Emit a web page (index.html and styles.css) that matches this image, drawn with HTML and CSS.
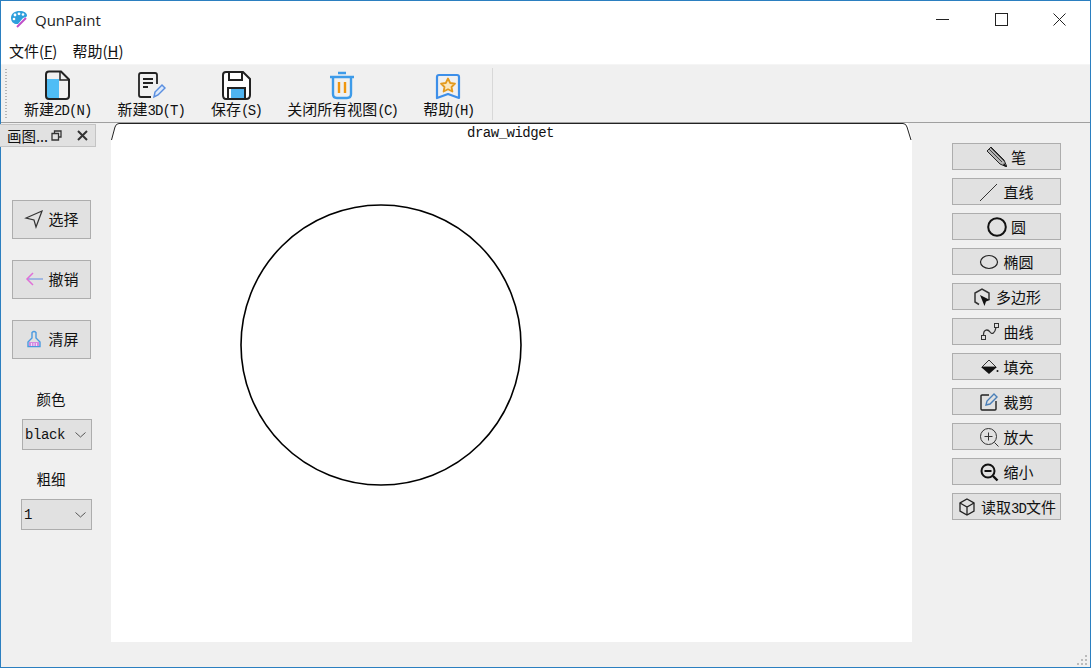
FILE: index.html
```html
<!DOCTYPE html>
<html lang="zh-CN">
<head>
    <meta charset="UTF-8">
    <title>QunPaint</title>
    <link rel="stylesheet" href="styles.css">
</head>
<body>
<div class="window">

    <!-- barre de titre -->
    <div class="titlebar">
        <svg class="app-icon" width="18" height="18" viewBox="0 0 18 18">
            <path d="M1 8C1 3.500 5 1 9.500 1S17 3 17 5.500C17 7 15 7.500 13 8L8 14C4 14.500 1 12 1 8Z" fill="#2f9fdc"/>
            <circle cx="5" cy="5" r="1.400" fill="#fff"/>
            <circle cx="9" cy="3.800" r="1.400" fill="#fff"/>
            <circle cx="13" cy="4.500" r="1.300" fill="#fff"/>
            <circle cx="4" cy="9" r="1.300" fill="#fff"/>
            <path d="M7 17L16 8" stroke="#c04fc8" stroke-width="2"/>
        </svg>
        <span class="app-title">QunPaint</span>
        <div class="win-controls">
            <div class="win-btn"><svg width="13" height="13" viewBox="0 0 13 13"><path d="M0 6.500H13" stroke="#222"/></svg></div>
            <div class="win-btn"><svg width="13" height="13" viewBox="0 0 13 13"><rect x=".5" y=".5" width="12" height="12" fill="none" stroke="#222"/></svg></div>
            <div class="win-btn"><svg width="13" height="13" viewBox="0 0 13 13"><path d="M.5 .5L12.500 12.500M12.500 .5L.5 12.500" stroke="#222"/></svg></div>
        </div>
    </div>

    <!-- menu -->
    <div class="menubar">
        <span class="menu-item">文件(<u>F</u>)</span>
        <span class="menu-item">帮助(<u>H</u>)</span>
    </div>

    <!-- barre d'outils -->
    <div class="toolbar">
        <div class="tool-handle"></div>
        <div class="tool-item">
            <svg width="30" height="30" viewBox="0 0 30 30">
                <path d="M4 9H16V28H4Z" fill="#4fbdf5"/>
                <path d="M6 1.500H18L26 9.500V26Q26 29 23 29H6Q3 29 3 26V4.500Q3 1.500 6 1.500Z" fill="none" stroke="#222" stroke-width="2"/>
                <path d="M17 2V10H26" fill="none" stroke="#222" stroke-width="1.500"/>
            </svg>
            <span class="tool-text">新建<span class="en">2D(N)</span></span>
        </div>
        <div class="tool-item">
            <svg width="30" height="30" viewBox="0 0 30 30">
                <path d="M21 14V5Q21 3 19 3H5Q3 3 3 5V25Q3 27 5 27H15" fill="none" stroke="#222" stroke-width="1.800"/>
                <path d="M7 9H17M7 13H17M7 17H12" stroke="#222" stroke-width="1.800"/>
                <path d="M18 27L19 22L26 15L29 18L22 25Z" fill="#dce9fb" stroke="#5b8fe0" stroke-width="1.500"/>
            </svg>
            <span class="tool-text">新建<span class="en">3D(T)</span></span>
        </div>
        <div class="tool-item">
            <svg width="30" height="30" viewBox="0 0 30 30">
                <path d="M5 2H22L29 9V25Q29 29 25 29H5Q2 29 2 25V5Q2 2 5 2Z" fill="#fff" stroke="#222" stroke-width="2"/>
                <path d="M8 3V10H21V3" fill="none" stroke="#222" stroke-width="2"/>
                <path d="M7 28V18H24V28" fill="#fff" stroke="#222" stroke-width="2"/>
                <rect x="10" y="19" width="13" height="9" fill="#4fb4f0"/>
            </svg>
            <span class="tool-text">保存<span class="en en-short">(S)</span></span>
        </div>
        <div class="tool-item">
            <svg width="30" height="30" viewBox="0 0 30 30">
                <path d="M3 7H27M11 3H19" stroke="#3d9be9" stroke-width="2.400" fill="none"/>
                <path d="M6 7V24Q6 28 10 28H20Q24 28 24 24V7" fill="none" stroke="#3d9be9" stroke-width="2.400"/>
                <path d="M12 12V23M18 12V23" stroke="#f0960e" stroke-width="2.400"/>
            </svg>
            <span class="tool-text tool-wide">关闭所有视图<span class="en en-short">(C)</span></span>
        </div>
        <div class="tool-item">
            <svg width="30" height="30" viewBox="0 0 30 30">
                <path d="M6 5H24Q26 5 26 7V28L15 24L4 28V7Q4 5 6 5Z" fill="none" stroke="#3d8fe9" stroke-width="2.200" stroke-linejoin="round"/>
                <path d="M15 8.500L17.200 13L22 13.600L18.500 17L19.400 21.500L15 19.300L10.600 21.500L11.500 17L8 13.600L12.800 13Z" fill="#fbe7bd" stroke="#e39a1e" stroke-width="1.800" stroke-linejoin="round"/>
            </svg>
            <span class="tool-text">帮助<span class="en en-short">(H)</span></span>
        </div>
        <div class="tool-sep"></div>
    </div>

    <div class="main">

        <!-- panneau gauche -->
        <div class="left-panel">
            <div class="dock-title">
                <span class="dock-name">画图...</span>
                <svg width="11" height="11" viewBox="0 0 11 11"><path d="M3.500 3V1H10V7H7.500M1 3.500H7.500V10H1Z" fill="none" stroke="#333" stroke-width="1.300"/></svg>
                <svg class="dock-close" width="11" height="11" viewBox="0 0 11 11"><path d="M1 1L10 10M10 1L1 10" stroke="#333" stroke-width="2"/></svg>
            </div>
            <div class="left-tools">
                <div class="btn btn-left">
                    <svg width="20" height="20" viewBox="0 0 20 20"><path d="M18 2L2 9L10 11L12 18Z" fill="none" stroke="#333" stroke-width="1.200"/></svg>
                    <span>选择</span>
                </div>
                <div class="btn btn-left">
                    <svg width="20" height="20" viewBox="0 0 20 20"><path d="M19 10H3" stroke="#8aa8e0" stroke-width="1.500"/><path d="M9 4L3 10L9 16" fill="none" stroke="#e070d8" stroke-width="1.500"/></svg>
                    <span>撤销</span>
                </div>
                <div class="btn btn-left">
                    <svg width="20" height="20" viewBox="0 0 20 20"><path d="M8 3.500Q10 1.500 12 3.500V9L16 13V17.500H4V13L8 9Z" fill="none" stroke="#4a9ae0" stroke-width="1.400"/><path d="M5 13H15V17H5Z" fill="#d58ae0"/><path d="M7.500 14V17M10 14V17M12.500 14V17" stroke="#fff" stroke-width=".7"/></svg>
                    <span>清屏</span>
                </div>
                <div class="field-label">颜色</div>
                <div class="combo combo-color">
                    <span class="en">black</span>
                    <svg width="11" height="6" viewBox="0 0 11 6"><path d="M.5 .5L5.500 5L10.500 .5" fill="none" stroke="#555"/></svg>
                </div>
                <div class="field-label field-second">粗细</div>
                <div class="combo combo-width">
                    <span class="en">1</span>
                    <svg width="11" height="6" viewBox="0 0 11 6"><path d="M.5 .5L5.500 5L10.500 .5" fill="none" stroke="#555"/></svg>
                </div>
            </div>
        </div>

        <!-- zone de dessin -->
        <div class="canvas">
            <svg class="canvas-tab" width="801" height="18" viewBox="0 0 801 18">
                <path d="M0 18V0H5L1 14Z" fill="#f0f0f0"/>
                <path d="M801 18V0H797L800.500 14Z" fill="#f0f0f0"/>
                <path d="M.5 17L4 4Q5 .5 8 .5H792Q795 .5 796 4L800 17" fill="none" stroke="#222"/>
            </svg>
            <div class="canvas-name en">draw_widget</div>
            <svg class="shape" width="282" height="282" viewBox="0 0 282 282">
                <circle cx="141" cy="141" r="140" fill="none" stroke="#000" stroke-width="1.600"/>
            </svg>
        </div>

        <!-- panneau droit -->
        <div class="right-panel">
            <div class="btn btn-right">
                <svg width="20" height="20" viewBox="0 0 20 20"><path d="M0 4L4 0L17 13L20 20L13 17Z" fill="#b5b5b5" stroke="#222"/><path d="M2 2L15 15M4 1L17 14" stroke="#222" stroke-width=".8"/><path d="M17 16L20 20L16 18.500Z" fill="#111"/></svg>
                <span>笔</span>
            </div>
            <div class="btn btn-right">
                <svg width="20" height="20" viewBox="0 0 20 20"><path d="M1 19L18 2" stroke="#333"/></svg>
                <span>直线</span>
            </div>
            <div class="btn btn-right">
                <svg width="20" height="20" viewBox="0 0 20 20"><circle cx="10" cy="10" r="8.800" fill="none" stroke="#111" stroke-width="2"/></svg>
                <span>圆</span>
            </div>
            <div class="btn btn-right">
                <svg width="20" height="20" viewBox="0 0 20 20"><ellipse cx="10" cy="10" rx="8.500" ry="6.500" fill="none" stroke="#222" stroke-width="1.200"/></svg>
                <span>椭圆</span>
            </div>
            <div class="btn btn-right">
                <svg width="20" height="20" viewBox="0 0 20 20"><path d="M7 17.500L3 15V6L10 2L17 6V13" fill="none" stroke="#333" stroke-width="1.500"/><path d="M8 8L18 13L14 14.500L12.500 19Z" fill="#111"/></svg>
                <span>多边形</span>
            </div>
            <div class="btn btn-right">
                <svg width="20" height="20" viewBox="0 0 20 20"><rect x="2.500" y="13.500" width="4" height="4" fill="none" stroke="#333"/><rect x="15.500" y="1.500" width="4" height="4" fill="none" stroke="#333"/><path d="M4.500 13C4.500 7 9 7 11 10S16 11 17 5.500" fill="none" stroke="#333" stroke-width="1.300"/></svg>
                <span>曲线</span>
            </div>
            <div class="btn btn-right">
                <svg width="20" height="20" viewBox="0 0 20 20"><path d="M10 3L17 10H3Z" fill="none" stroke="#333"/><path d="M2 10H18L10 17Z" fill="#111"/><circle cx="18.500" cy="14" r="1" fill="#111"/></svg>
                <span>填充</span>
            </div>
            <div class="btn btn-right">
                <svg width="20" height="20" viewBox="0 0 20 20"><path d="M10 3H3Q2 3 2 4V17Q2 18 3 18H16Q17 18 17 17V9" fill="none" stroke="#222" stroke-width="1.400"/><path d="M7 13L8 9L15 2L18 5L11 12Z" fill="none" stroke="#4a7fb8" stroke-width="1.400"/></svg>
                <span>裁剪</span>
            </div>
            <div class="btn btn-right">
                <svg width="20" height="20" viewBox="0 0 20 20"><circle cx="9.500" cy="9.500" r="8" fill="none" stroke="#333"/><path d="M9.500 5.500V13.500M5.500 9.500H13.500" stroke="#333"/><path d="M15.500 15.500L19.500 19.500" stroke="#333"/></svg>
                <span>放大</span>
            </div>
            <div class="btn btn-right">
                <svg width="20" height="20" viewBox="0 0 20 20"><circle cx="9" cy="9" r="6.500" fill="none" stroke="#111" stroke-width="2"/><path d="M5.500 9H12.500" stroke="#111" stroke-width="2"/><path d="M14 14L18.500 18.500" stroke="#111" stroke-width="2.400"/></svg>
                <span>缩小</span>
            </div>
            <div class="btn btn-right">
                <svg width="20" height="20" viewBox="0 0 20 20"><path d="M10 2L17 6V14L10 18L3 14V6Z" fill="none" stroke="#222" stroke-width="1.300"/><path d="M3 6L10 10L17 6M10 10V18" fill="none" stroke="#222" stroke-width="1.300"/></svg>
                <span>读取<span class="en">3D</span>文件</span>
            </div>
        </div>
    </div>

    <svg class="size-grip" width="12" height="12" viewBox="0 0 12 12">
        <path d="M9 1h2v2H9zM5 5h2v2H5zM9 5h2v2H9zM1 9h2v2H1zM5 9h2v2H5zM9 9h2v2H9z" fill="#bbb"/>
    </svg>
</div>
</body>
</html>
```

FILE: styles.css
```css
html, body {
    margin: 0;
    padding: 0;
    height: 100%;
    overflow: hidden;
}

body {
    font-family: "Noto Sans CJK SC", "Noto Sans", sans-serif;
    font-size: 15px;
    color: #111;
    background-color: #f0f0f0;
}

.window {
    position: relative;
    box-sizing: border-box;
    width: 1091px;
    height: 668px;
    display: flex;
    flex-direction: column;
    border: 1px solid #2b7fc0;
    background-color: #f0f0f0;
}

.en {
    font-family: "Liberation Mono", monospace;
    font-size: 14px;
    letter-spacing: -0.9px;
}

.en-short {
    letter-spacing: -1.7px;
}

/* Barre de titre */
.titlebar {
    height: 37px;
    flex: none;
    display: flex;
    align-items: center;
    background-color: #fff;
}

.app-icon {
    margin-left: 9px;
    margin-right: 7px;
    margin-top: -2px;
}

.app-title {
    font-family: "Open Sans", sans-serif;
    font-size: 15px;
    color: #222;
}

.win-controls {
    margin-left: auto;
    margin-right: 1px;
    display: flex;
}

.win-btn {
    width: 58.500px;
    display: flex;
    justify-content: center;
    align-items: center;
}

/* Menu */
.menubar {
    height: 27px;
    flex: none;
    display: flex;
    align-items: flex-start;
    gap: 15px;
    padding-left: 8px;
    background-color: #fff;
    border-bottom: 1px solid #f5f5f5;
    box-sizing: border-box;
}

.menu-item {
    font-size: 15px;
    line-height: 25px;
}

/* Barre d'outils */
.toolbar {
    height: 58px;
    flex: none;
    box-sizing: border-box;
    display: flex;
    align-items: flex-start;
    padding-left: 4px;
    border-bottom: 1px solid #a0a0a0;
}

.tool-handle {
    width: 3px;
    height: 50px;
    margin-top: 3px;
    margin-right: 3px;
    background-image: radial-gradient(#b5b5b5 50%, transparent 50%);
    background-size: 2px 3px;
    background-repeat: repeat-y;
}

.tool-item {
    display: flex;
    flex-direction: column;
    align-items: center;
    padding: 5px 13px 0;
}

.tool-text {
    font-size: 15px;
    line-height: 17px;
    white-space: nowrap;
}

.tool-sep {
    width: 1px;
    height: 52px;
    margin-top: 3px;
    margin-left: 6px;
    background-color: #d8d8d8;
}

/* Disposition principale */
.main {
    flex: 1;
    display: grid;
    grid-template-columns: 110px 801px 1fr;
    min-height: 0;
}

/* Panneau gauche */
.left-panel {
    display: flex;
    flex-direction: column;
}

.dock-title {
    box-sizing: border-box;
    width: 96px;
    height: 23px;
    margin-top: 1px;
    margin-left: -1px;
    padding-left: 7px;
    padding-bottom: 1px;
    display: flex;
    align-items: center;
    background-color: #e1e1e1;
    border: 1px solid #c4c4c4;
    border-left: none;
}

.dock-name {
    width: 44px;
    white-space: nowrap;
    font-size: 14.500px;
}

.dock-close {
    margin-left: 15px;
}

.left-tools {
    display: flex;
    flex-direction: column;
    padding-top: 53px;
}

.btn {
    box-sizing: border-box;
    display: flex;
    align-items: center;
    justify-content: center;
    gap: 4px;
    padding-bottom: 2px;
    background-color: #e1e1e1;
    border: 1px solid #adadad;
    white-space: nowrap;
}

.btn-left {
    width: 79px;
    height: 39px;
    margin-left: 11px;
    margin-bottom: 21px;
}

.field-label {
    width: 100px;
    text-align: center;
    line-height: 20px;
    font-size: 14.500px;
    margin-top: 9px;
    margin-bottom: 10px;
}

.field-second {
    margin-top: 19px;
}

.combo {
    box-sizing: border-box;
    height: 31px;
    display: flex;
    align-items: center;
    justify-content: space-between;
    padding: 0 5px 0 2px;
    background-color: #e1e1e1;
    border: 1px solid #adadad;
}

.combo-color {
    width: 70px;
    margin-left: 21px;
}

.combo-width {
    width: 71px;
    margin-left: 20px;
}

.combo .en {
    letter-spacing: -0.4px;
}

/* Zone de dessin */
.canvas {
    position: relative;
    height: 519px;
    background-color: #fff;
}

.canvas-tab {
    position: absolute;
    left: 0;
    top: 0;
}

.canvas-name {
    text-align: center;
    letter-spacing: -0.500px;
    line-height: 18px;
    padding-top: 1px;
    padding-right: 2px;
}

.shape {
    position: absolute;
    left: 129px;
    top: 81px;
}

/* Panneau droit */
.right-panel {
    display: flex;
    flex-direction: column;
    gap: 8px;
    padding-top: 20px;
    padding-left: 40px;
}

.btn-right {
    width: 109px;
    height: 27px;
    padding-bottom: 0;
}

.size-grip {
    position: absolute;
    right: 2px;
    bottom: 1px;
}
```
